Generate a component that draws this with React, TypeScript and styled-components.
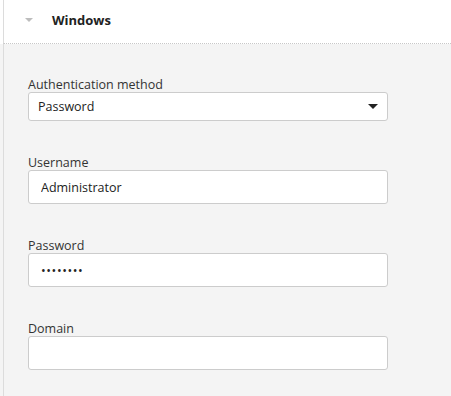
import React, { useState } from 'react';
import styled, { createGlobalStyle } from 'styled-components';

const GlobalStyle = createGlobalStyle`
  html, body {
    margin: 0;
    padding: 0;
    background: #f4f4f4;
    font-family: 'Open Sans', 'Noto Sans', sans-serif;
  }
`;

const Panel = styled.div`
  width: 451px;
  height: 396px;
  display: flex;
  flex-direction: column;
  overflow: hidden;
`;

// 섹션 머리
const Header = styled.div`
  height: 39px;
  margin-left: 3px;
  display: flex;
  align-items: center;
  padding: 0 0 4px 21px;
  background: #ffffff;
  border-left: 1px solid #dcdcdc;
  border-bottom: 1px dotted #c8c8c8;
  box-shadow: -3px 0 0 #ffffff;
`;

const Caret = styled.span<{ $color: string; $size: number }>`
  width: 0;
  height: 0;
  border-left: ${(p) => p.$size}px solid transparent;
  border-right: ${(p) => p.$size}px solid transparent;
  border-top: ${(p) => Math.round(p.$size * 0.9)}px solid ${(p) => p.$color};
`;

const Title = styled.span`
  margin-left: 19px;
  font-size: 13px;
  font-weight: 700;
  color: #222;
`;

const Body = styled.div`
  flex: 1;
  margin-left: 3px;
  padding: 34px 0 0 24px;
  display: flex;
  flex-direction: column;
  gap: 35px;
  background: #f4f4f4;
  border-left: 1px solid #dcdcdc;
  box-shadow: -3px 0 0 #f4f4f4;
`;

const Field = styled.div`
  width: 360px;
  display: flex;
  flex-direction: column;
`;

const Label = styled.label`
  font-size: 12.5px;
  line-height: 14px;
  color: #333;
`;

const Select = styled.div`
  height: 27px;
  display: flex;
  align-items: center;
  justify-content: space-between;
  padding: 0 9px 0 9px;
  background: #fff;
  border: 1px solid #cccccc;
  border-radius: 3px;
  font-size: 12.5px;
  color: #222;
  cursor: pointer;
`;

const Input = styled.input<{ $spacing?: number }>`
  box-sizing: border-box;
  height: 34px;
  padding: 0 12px;
  background: #fff;
  border: 1px solid #cccccc;
  border-radius: 3px;
  font-family: inherit;
  font-size: 12.5px;
  letter-spacing: ${(p) => p.$spacing ?? 0}px;
  color: #222;
  outline: none;
`;

const App: React.FC = () => {
  const [username, setUsername] = useState('Administrator');
  const [password, setPassword] = useState('12345678');
  const [domain, setDomain] = useState('');

  return (
    <Panel>
      <GlobalStyle />
      <Header>
        <Caret $color="#bdbdbd" $size={4} />
        <Title>Windows</Title>
      </Header>
      <Body>
        <Field>
          <Label>Authentication method</Label>
          <Select>
            <span>Password</span>
            <Caret $color="#222" $size={5} />
          </Select>
        </Field>
        <Field>
          <Label>Username</Label>
          <Input value={username} onChange={(e) => setUsername(e.target.value)} />
        </Field>
        <Field>
          <Label>Password</Label>
          <Input type="password" $spacing={0.6} value={password} onChange={(e) => setPassword(e.target.value)} />
        </Field>
        <Field>
          <Label>Domain</Label>
          <Input value={domain} onChange={(e) => setDomain(e.target.value)} />
        </Field>
      </Body>
    </Panel>
  );
};

export default App;
